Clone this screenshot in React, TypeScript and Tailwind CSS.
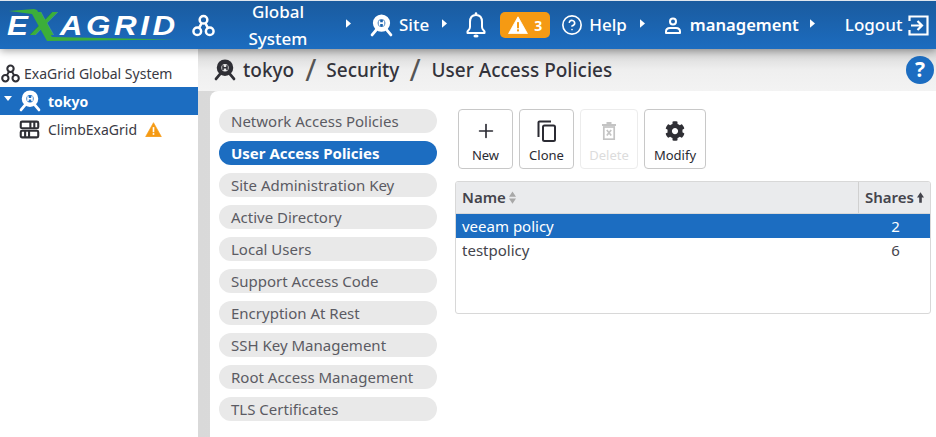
import React from "react";
import { Plus, CircleHelp } from "lucide-react";
import { FaCog } from "react-icons/fa";

const SiteIcon = ({ className = "" }: { className?: string }) => (
  <svg viewBox="0 0 24 24" className={className} fill="none" stroke="currentColor">
    <circle cx="12" cy="9.500" r="6.500" strokeWidth="5" />
    <path d="M9.800 6.800v5.400M14.200 6.800v5.400M9.800 9.500h4.400" strokeWidth="1.700" />
    <path d="M7 16 2.200 21.800M17 16l4.800 5.800" strokeWidth="3" strokeLinecap="round" />
  </svg>
);

const GlobalIcon = ({ className = "" }: { className?: string }) => (
  <svg viewBox="0 0 24 24" className={className} fill="none" stroke="currentColor" strokeWidth="2.600">
    <circle cx="12" cy="6" r="4" />
    <circle cx="5.500" cy="18" r="4" />
    <circle cx="18.500" cy="18" r="4" />
    <path d="M10.200 9.300 7.300 14.700M13.800 9.300l2.900 5.400" />
  </svg>
);

const ServerIcon = ({ className = "" }: { className?: string }) => (
  <svg viewBox="0 0 24 24" className={className} fill="none" stroke="currentColor" strokeWidth="2.400">
    <rect x="2" y="3" width="20" height="7.500" rx="1.500" />
    <rect x="2" y="13.500" width="20" height="7.500" rx="1.500" />
    <path d="M13 3v7.500M17.500 3v7.500M7 13.500v7.500M11.500 13.500v7.500" />
  </svg>
);

const Caret = () => (
  <svg viewBox="0 0 6 10" className="w-[5px] h-[9px] shrink-0 mb-1" fill="currentColor">
    <path d="M0 0l6 5-6 5z" />
  </svg>
);

const Warn = ({ className = "" }: { className?: string }) => (
  <svg viewBox="0 0 24 22" className={className}>
    <path d="M12 1 23.500 21.500H.5z" fill="currentColor" stroke="currentColor" strokeLinejoin="round" strokeWidth="1" />
    <rect x="10.800" y="7.500" width="2.400" height="7.500" fill="var(--mark)" />
    <rect x="10.800" y="16.300" width="2.400" height="2.500" fill="var(--mark)" />
  </svg>
);

const BellIcon = () => (
  <svg viewBox="0 0 20 26" className="w-[20px] h-[26px] ml-[19px] shrink-0" fill="none" stroke="currentColor" strokeWidth="2">
    <path d="M10 3C5.500 3 4 6.500 4 10v5c0 2.500-2 3.500-2.500 4.500V21h17v-1.500C18 18.500 16 17.500 16 15v-5c0-3.500-1.500-7-6-7z" strokeLinejoin="round" />
    <circle cx="10" cy="1.500" r="1.300" fill="currentColor" stroke="none" />
    <ellipse cx="10" cy="24" rx="2.600" ry="1.500" fill="currentColor" stroke="none" />
  </svg>
);

const UserIcon = () => (
  <svg viewBox="0 0 16 17" className="w-[16px] h-[17px] ml-[20px] shrink-0" fill="none" stroke="currentColor" strokeWidth="2">
    <circle cx="8" cy="4.500" r="3" />
    <path d="M1 16v-1.500C1 12 3 11 5 11h6c2 0 4 1 4 3.500V16z" strokeLinejoin="round" />
  </svg>
);

const LogoutIcon = () => (
  <svg viewBox="0 0 21 21" className="w-[21px] h-[21px] ml-[6px] shrink-0" fill="none" stroke="currentColor" strokeWidth="2.200">
    <path d="M1.500 6V1.500h18v18h-18V15" />
    <path d="M3 10.500h10.500M9.500 6l4.500 4.500L9.500 15" />
  </svg>
);

const CloneIcon = () => (
  <svg viewBox="0 0 19 22" className="w-[19px] h-[22px]" fill="none" stroke="currentColor" strokeWidth="2">
    <rect x="6" y="5.500" width="12" height="15.500" rx="1.500" />
    <path d="M1.500 17V2.500a1 1 0 0 1 1-1H14" />
  </svg>
);

const TrashIcon = () => (
  <svg viewBox="0 0 14 18" className="w-[14px] h-[18px] text-[#c4c4c4]" fill="none" stroke="currentColor">
    <path d="M0 3h14" strokeWidth="2" />
    <path d="M4.500 1h5" strokeWidth="2" />
    <rect x="1.800" y="5" width="10.400" height="12.200" strokeWidth="1.700" />
    <path d="M4.800 8l4.400 5.500M9.200 8l-4.400 5.500" strokeWidth="1.700" />
  </svg>
);

const tabs = [
  "Network Access Policies",
  "User Access Policies",
  "Site Administration Key",
  "Active Directory",
  "Local Users",
  "Support Access Code",
  "Encryption At Rest",
  "SSH Key Management",
  "Root Access Management",
  "TLS Certificates",
];

const Tool = ({ label, w, disabled, children }: { label: string; w: string; disabled?: boolean; children: React.ReactNode }) => (
  <div className={`${w} h-[60px] rounded-[4px] border flex flex-col items-center pt-[9px] bg-white ${disabled ? "border-[#ececec] text-[#dcdcdc]" : "border-[#c8c8c8] text-[#2b2b33]"}`}>
    <div className="h-[24px] flex items-center justify-center">{children}</div>
    <div className="text-[13px] leading-[18px] mt-[3px]">{label}</div>
  </div>
);

export default function App() {
  return (
    <div className="w-[936px] h-[437px] overflow-hidden flex flex-col bg-white text-[#3a3a44] font-['Noto_Sans','Open_Sans',sans-serif]">
      <header className="relative z-10 h-[49px] shrink-0 flex items-center text-white bg-gradient-to-b from-[#1a5b9f] to-[#1c6cbf] border-t border-[#dfe6ee] shadow-[0_2px_8px_rgba(0,0,0,0.35)]">
        <div className="relative w-[168px] ml-[7px] h-[38px] shrink-0">
          <svg viewBox="0 0 168 38" className="absolute inset-0 w-[168px] h-[38px]" fill="none">
            <path d="M2 5 L27 3 L30 4 L45 31 L168 33.500 L40 35 L25 8z" fill="#3cae3a" />
          </svg>
          <div className="absolute left-0 top-[1px] origin-left scale-x-[1.12] text-[28px] leading-[36px] font-bold italic tracking-[3.200px] font-['Liberation_Sans',sans-serif] whitespace-nowrap">
            E<span className="text-[#3cae3a] text-[33px] leading-none">X</span>AGRID
          </div>
        </div>
        <GlobalIcon className="w-[23px] h-[23px] ml-[17px] shrink-0" />
        <div className="w-[84px] ml-[21px] text-center text-[17px] font-medium leading-[27px]">Global System</div>
        <div className="ml-[26px]"><Caret /></div>
        <SiteIcon className="w-[23px] h-[23px] ml-[19px] shrink-0" />
        <span className="ml-[6px] text-[17px] font-medium">Site</span>
        <div className="ml-[13px]"><Caret /></div>
        <BellIcon />
        <div className="ml-[14px] w-[50px] h-[26px] rounded-[5px] bg-[#f59a13] flex items-center justify-center gap-[6px] [--mark:#f59a13]">
          <Warn className="w-[20px] h-[18px]" />
          <span className="text-[14px] font-bold">3</span>
        </div>
        <CircleHelp className="w-[22px] h-[22px] ml-[11px] shrink-0" strokeWidth={1.800} />
        <span className="ml-[6px] text-[17px] font-medium">Help</span>
        <div className="ml-[13px]"><Caret /></div>
        <UserIcon />
        <span className="ml-[9px] text-[16.600px] font-semibold">management</span>
        <div className="ml-[11px]"><Caret /></div>
        <span className="ml-[30px] text-[17px] font-medium">Logout</span>
        <LogoutIcon />
      </header>

      <div className="flex-1 flex min-h-0">
        <aside className="w-[198px] shrink-0 bg-white pt-[11px] text-[14px]">
          <div className="h-[27px] flex items-center pl-[1px] gap-[4px] text-[#3a3a44]">
            <GlobalIcon className="w-[19px] h-[19px] text-[#2f2f35]" />
            <span className="whitespace-nowrap">ExaGrid Global System</span>
          </div>
          <div className="h-[28px] flex items-center bg-[#1c6dc1] text-white">
            <svg viewBox="0 0 8 5" className="w-[8px] h-[5px] ml-[4px] mb-[6px]" fill="currentColor"><path d="M0 0h8L4 5z" /></svg>
            <SiteIcon className="w-[22px] h-[22px] ml-[7px]" />
            <span className="ml-[7px] font-bold">tokyo</span>
          </div>
          <div className="h-[28px] flex items-center text-[#3a3a44]">
            <ServerIcon className="w-[21px] h-[21px] ml-[19px] text-[#2f2f35]" />
            <span className="ml-[8px]">ClimbExaGrid</span>
            <Warn className="w-[17px] h-[15px] ml-[8px] text-[#f59a13] [--mark:#ffffff]" />
          </div>
        </aside>

        <main className="flex-1 min-w-0 flex flex-col">
          <div className="h-[42px] shrink-0 flex items-center pl-[16px] pr-[2px] text-[#33333b] bg-gradient-to-b from-[#d4d4d4] via-[#efefef] to-[#f3f3f3]">
            <SiteIcon className="w-[22px] h-[22px] text-[#2f2f35]" />
            <span className="ml-[7px] text-[19px] font-medium">tokyo</span>
            <span className="ml-[11px] text-[30px] leading-none text-[#555]">/</span>
            <span className="ml-[10px] text-[19px] font-medium">Security</span>
            <span className="ml-[10px] text-[30px] leading-none text-[#555]">/</span>
            <span className="ml-[11px] text-[19px] font-medium">User Access Policies</span>
            <div className="ml-auto w-[28px] h-[28px] rounded-full bg-[#1c6dc1] text-white flex items-center justify-center text-[21px] font-bold">?</div>
          </div>
          <div className="flex-1 flex min-h-0 bg-gradient-to-r from-[#d9d9d9] to-[#eeeeee] w-full">
            <div className="ml-[12px] flex-1 flex bg-white rounded-tl-[8px] pt-[18px] pl-[9px] pr-[5px]">
              <nav className="w-[218px] shrink-0 flex flex-col gap-[8px]">
                {tabs.map((t, i) => (
                  <div key={t} className={`h-[24px] rounded-full pl-[12px] flex items-center text-[15px] whitespace-nowrap ${i === 1 ? "bg-[#1c6dc1] text-white font-bold" : "bg-[#e9e9e9] text-[#5b5b63]"}`}>{t}</div>
                ))}
              </nav>
              <div className="flex-1 ml-[18px] min-w-0">
                <div className="flex pl-[3px] gap-[6px]">
                  <Tool label="New" w="w-[55px]"><Plus className="w-[22px] h-[22px]" strokeWidth={1.800} /></Tool>
                  <Tool label="Clone" w="w-[55px]"><CloneIcon /></Tool>
                  <Tool label="Delete" w="w-[58px]" disabled><TrashIcon /></Tool>
                  <Tool label="Modify" w="w-[62px]"><FaCog className="w-[20px] h-[20px] text-[#2f2f35]" /></Tool>
                </div>
                <div className="mt-[12px] w-full h-[133px] border border-[#d8d8d8] rounded-[3px] text-[15px] overflow-hidden">
                  <div className="h-[32px] flex items-center bg-[#eaebed] font-semibold text-[#44444c] border-b border-[#d8d8d8]">
                    <div className="flex-1 pl-[6px] flex items-center gap-[3px]">
                      Name
                      <svg viewBox="0 0 8 14" className="w-[7px] h-[13px] text-[#a8a8a8]" fill="currentColor"><path d="M4 0l4 6H0zM0 8h8l-4 6z" /></svg>
                    </div>
                    <div className="w-[72px] h-full flex items-center gap-[3px] pl-[6px] border-l border-[#d0d0d0]">
                      Shares
                      <svg viewBox="0 0 8 12" className="w-[7px] h-[11px] text-[#44444c]" fill="currentColor"><path d="M4 0l4 6H5.500v6h-3V6H0z" /></svg>
                    </div>
                  </div>
                  <div className="h-[24px] flex items-center bg-[#1c6dc1] text-white">
                    <div className="flex-1 pl-[6px]">veeam policy</div>
                    <div className="w-[72px] text-center pr-[2px] pl-[5px]">2</div>
                  </div>
                  <div className="h-[24px] flex items-center text-[#44444c]">
                    <div className="flex-1 pl-[6px]">testpolicy</div>
                    <div className="w-[72px] text-center pr-[2px] pl-[5px]">6</div>
                  </div>
                </div>
              </div>
            </div>
          </div>
        </main>
      </div>
    </div>
  );
}
